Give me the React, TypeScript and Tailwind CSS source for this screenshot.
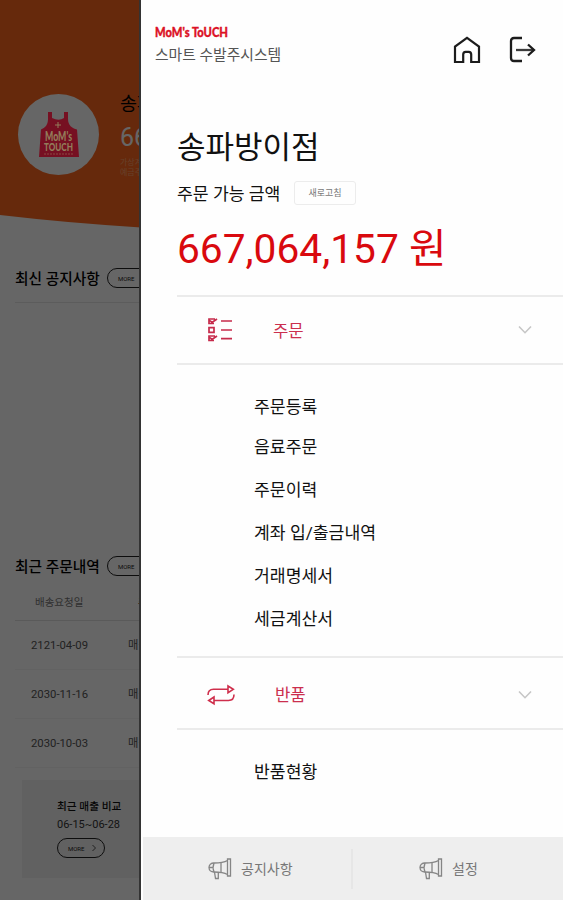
import { useState } from 'react'
import type { ReactNode } from 'react'

/* ─── Data ─── */

const ORDER_ITEMS = ['음료주문', '주문이력', '계좌 입/출금내역', '거래명세서', '세금계산서']
const RECENT_ORDERS = ['2121-04-09', '2030-11-16', '2030-10-03']

/* ─── Icons ─── */

function HomeIcon() {
  return (
    <svg width="28" height="28" viewBox="0 0 28 28" fill="none" stroke="#1c1c1c" strokeWidth="2.2">
      <path d="M2 26V10.5L14 1.8L26 10.5V26H18.2V18.5Q18.2 15.8 15.8 15.8H12.6Q10.2 15.8 10.2 18.5V26Z" />
    </svg>
  )
}

function LogoutIcon() {
  return (
    <svg width="28" height="28" viewBox="0 0 28 28" fill="none" stroke="#1c1c1c" strokeWidth="2.3">
      <path d="M14 2H6Q3 2 3 5V22Q3 25 6 25H14" />
      <path d="M8 14H26" stroke="#3c3c3c" />
      <path d="M20 8.5L26 14L20 19.5" />
    </svg>
  )
}

function OrderIcon() {
  return (
    <svg width="26" height="26" viewBox="0 0 26 26" fill="none" stroke="#c62b4b" strokeWidth="1.7">
      <path d="M7 6.5H2V2H8M3 3.5L5 5.5L10 2" />
      <path d="M2 10.7H7V15.3H2Z" />
      <path d="M7 23.5H2V19H8M3 20.5L5 22.5L10 19" />
      <path d="M14 4H25M14 13H25M14 21.7H25" />
    </svg>
  )
}

function ReturnIcon() {
  return (
    <svg width="28" height="22" viewBox="0 0 28 22" fill="none" stroke="#cf2f4c" strokeWidth="1.6">
      <path d="M1 11C1 7.5 3 5.3 6.5 5.3H21" />
      <path d="M21 2L26.3 5.3L21 8.7Z" />
      <path d="M27 10.5C27 14 25 16.5 21.5 16.5H7" />
      <path d="M7 13L1.7 16.5L7 19.8Z" />
    </svg>
  )
}

function ChevronIcon() {
  return (
    <svg width="14" height="10" viewBox="0 0 14 10" fill="none" stroke="#c6c6c6" strokeWidth="1.6">
      <path d="M1 1.5L7 7.7L13 1.5" />
    </svg>
  )
}

function MegaphoneIcon() {
  return (
    <svg width="24" height="22" viewBox="0 0 24 22" fill="none" stroke="#858585" strokeWidth="1.3">
      <path d="M19.5 1H22.5V18H19.5Z" />
      <path d="M19.5 2.5C16 4.5 12 5 6 5C3 5 1 7 1 9.5C1 12 3 14 6 14C12 14 16 14.5 19.5 16.5" />
      <path d="M6 5C4.8 8 4.8 11 6 14M13 5V14M6.5 14L7.5 20.5H10.3V14.3M1 9.5H5" />
    </svg>
  )
}

function ApronLogo() {
  return (
    <svg className="relative z-10" width="44" height="48" viewBox="0 0 44 48">
      <path
        d="M11 1H15V7Q22 10.5 27 7V1H31V8C31 14 35 17.5 40 18.5L42 46H2L4 18.5C8 17 11 14 11 8Z"
        fill="#761022"
      />
      <path d="M21 11V17M18 14H24" stroke="#937c5a" strokeWidth="1" />
      <text
        x="21.5" y="29.5" textAnchor="middle" textLength="27" lengthAdjust="spacingAndGlyphs"
        fontSize="12.5" fontWeight="900" fontFamily="Lato, sans-serif" fill="#937c5a"
      >
        MoM's
      </text>
      <text
        x="21.5" y="39.5" textAnchor="middle" textLength="29" lengthAdjust="spacingAndGlyphs"
        fontSize="11.5" fontWeight="900" fontFamily="Lato, sans-serif" fill="#937c5a"
      >
        TOUCH
      </text>
      <path d="M7 43H37" stroke="#8a4a42" strokeWidth="1" strokeDasharray="2 1" />
    </svg>
  )
}

/* ─── Page behind the drawer ─── */

function MoreButton() {
  return (
    <span className="flex h-5 w-12 shrink-0 items-center rounded-full border border-[#222] pl-2.5 text-[6px] text-[#222]">
      MORE
      <svg className="ml-2" width="4" height="8" viewBox="0 0 4 8" fill="none" stroke="#555">
        <path d="M0.5 1L3.5 4L0.5 7" />
      </svg>
    </span>
  )
}

function HomePage() {
  return (
    <div className="relative h-full w-[141px] shrink-0 overflow-hidden bg-white">
      <div className="w-[563px]">
        <div className="flex h-[215px] bg-[#ff6820] pt-[94px] pl-[18px]">
          <div className="flex size-[81px] items-center justify-center rounded-full bg-white">
            <ApronLogo />
          </div>
          <div className="ml-[21px]">
            <p className="h-5 text-[18.5px] leading-[20px] text-black">송파방이점</p>
            <p className="mt-2 h-[30px] text-[25px] leading-[31px] text-white">667,064,157 원</p>
            <p className="mt-1.5 text-[8px] leading-[10px] text-[#ffa06a]">가상계좌</p>
            <p className="text-[8px] leading-[10px] text-[#ffa06a]">예금주명</p>
          </div>
        </div>
        <svg className="block" width="563" height="19" viewBox="0 0 563 19">
          <path d="M0 0H563Q282 33 0 0Z" fill="#ff6820" />
        </svg>

        <div className="mt-[34px] flex h-5 items-center gap-[7px] pl-[15px]">
          <h2 className="w-[85px] pt-px text-[14.7px] leading-5 font-medium whitespace-nowrap">최신 공지사항</h2>
          <MoreButton />
        </div>
        <div className="mt-3.5 ml-[15px] h-[254px] border-t border-[#e6e6e6]" />
        <div className="flex h-5 items-center gap-[7px] pl-[15px]">
          <h2 className="w-[85px] pt-px text-[14.7px] leading-5 font-medium whitespace-nowrap">최근 주문내역</h2>
          <MoreButton />
        </div>

        <div className="mt-0.5 ml-[15px] flex h-[43px] items-center border-b border-[#e0e0e0] pt-2 pl-5 text-[10.5px] text-[#777]">
          <span className="w-[103px]">배송요청일</span>
          <span className="text-black">주문</span>
        </div>
        {RECENT_ORDERS.map((date) => (
          <div
            key={date}
            className="ml-[15px] flex h-[49px] items-center border-b border-[#f4f4f4] pt-0.5 pl-4 text-[11.3px] text-[#555]"
          >
            <span className="w-[97px]">{date}</span>
            <span>매출</span>
          </div>
        ))}
        <div className="mt-[12px] ml-[22px] h-[98px] bg-[#f2f2f2] pt-[18px] pl-[35px]">
          <p className="text-[10.7px] leading-[18px] font-medium text-[#111]">최근 매출 비교</p>
          <p className="mb-1 text-[11px] leading-[18px] text-[#333]">06-15~06-28</p>
          <MoreButton />
        </div>
      </div>
      <div className="absolute inset-0 border-r-2 border-[#333] bg-black/60" />
    </div>
  )
}

/* ─── Drawer ─── */

function MenuHeader({
  icon,
  label,
  onClick,
  className,
}: {
  icon: ReactNode
  label: string
  onClick: () => void
  className: string
}) {
  return (
    <button
      onClick={onClick}
      className={`ml-9 flex items-center border-y-2 border-[#ebebeb] pr-[31px] pl-[30px] text-[16.7px] text-[#cb2f4e] ${className}`}
    >
      {icon}
      <span className="flex-1 pt-[3px] text-left">{label}</span>
      <ChevronIcon />
    </button>
  )
}

function Drawer() {
  const [orderOpen, setOrderOpen] = useState(true)
  const [returnOpen, setReturnOpen] = useState(true)

  return (
    <aside className="flex h-full flex-1 flex-col bg-[#fefefe]">
      <header className="flex h-[127px] justify-between pt-6 pr-[27px] pl-[14px]">
        <div>
          <svg className="block" width="74" height="16" viewBox="0 0 74 16">
            <text
              x="0" y="13" textLength="73" lengthAdjust="spacingAndGlyphs" fontSize="13.5" fontWeight="900"
              fontFamily="Lato, sans-serif" fill="#dc1226" stroke="#dc1226" strokeWidth="0.4"
            >
              MoM's ToUCH
            </text>
          </svg>
          <p className="mt-[5px] text-[14.8px] leading-5 text-[#555]">스마트 수발주시스템</p>
        </div>
        <div className="flex h-7 gap-[27px] pt-3">
          <HomeIcon />
          <LogoutIcon />
        </div>
      </header>

      <section className="h-[168px] pl-9">
        <h1 className="h-10 text-[31px] leading-[42px] text-[#111]">송파방이점</h1>
        <div className="mt-[12px] flex h-7 items-center">
          <span className="w-[117px] pt-[3px] text-[17.2px] text-[#111]">주문 가능 금액</span>
          <button className="h-6 w-[62px] rounded-[3px] border border-[#ececec] pt-px text-[9px] text-[#777]">
            새로고침
          </button>
        </div>
        <p className="mt-[13px] text-[40.7px] leading-[58px] whitespace-nowrap text-[#d9090e]">667,064,157 원</p>
      </section>

      <MenuHeader
        icon={<span className="w-[66px]"><OrderIcon /></span>}
        label="주문"
        onClick={() => setOrderOpen(!orderOpen)}
        className="h-[70px]"
      />
      {orderOpen && (
        <ul className="h-[291px] pt-[22px] pl-[113px] text-[17.2px] leading-[43px] text-[#111]">
          <li className="h-[39px] leading-[41px]">주문등록</li>
          {ORDER_ITEMS.map((item) => (
            <li key={item}>{item}</li>
          ))}
        </ul>
      )}

      <MenuHeader
        icon={<span className="w-[68px]"><ReturnIcon /></span>}
        label="반품"
        onClick={() => setReturnOpen(!returnOpen)}
        className="h-[74px] pt-[3px]"
      />
      {returnOpen && (
        <ul className="pt-[21px] pl-[113px] text-[17.2px] leading-[43px] text-[#111]">
          <li>반품현황</li>
        </ul>
      )}

      <footer className="mt-auto ml-0.5 flex h-[63px] items-center bg-[#eeeeee] text-[14px] text-[#777]">
        <a className="flex w-[208px] items-center gap-[9px] pl-[65px]">
          <MegaphoneIcon />
          <span className="pt-0.5">공지사항</span>
        </a>
        <span className="h-10 w-0.5 bg-[#e6e6e6]" />
        <a className="flex items-center gap-[9px] pl-[66px]">
          <MegaphoneIcon />
          <span className="pt-0.5">설정</span>
        </a>
      </footer>
    </aside>
  )
}

export default function App() {
  return (
    <div className="flex h-[900px] w-[563px] overflow-hidden font-['Roboto','Noto_Sans_CJK_KR',sans-serif]">
      <HomePage />
      <Drawer />
    </div>
  )
}
